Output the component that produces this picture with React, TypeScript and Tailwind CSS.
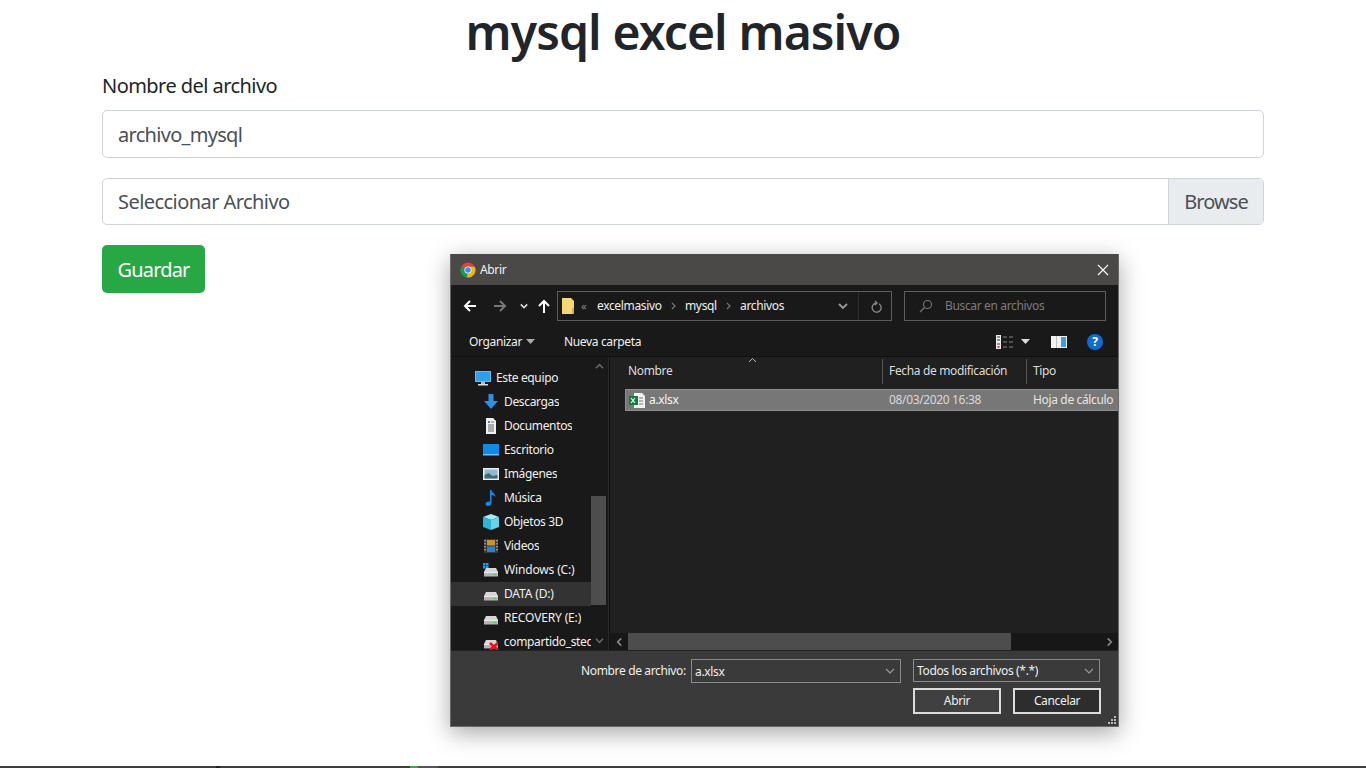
import React from "react";

const ui = "font-['Noto_Sans','Open_Sans',sans-serif]";

function Chrome() {
  return (
    <svg width="16" height="16" viewBox="0 0 16 16">
      <circle cx="8" cy="8" r="7.5" fill="#db4437" />
      <path d="M8 8 L1.5 4.2 A7.5 7.5 0 0 0 7 15.4 Z" fill="#0f9d58" />
      <path d="M8 8 L7 15.4 A7.5 7.5 0 0 0 14.8 4.8 L8 4.8 Z" fill="#f4b400" />
      <circle cx="8" cy="8" r="3.6" fill="#fff" />
      <circle cx="8" cy="8" r="2.8" fill="#4285f4" />
    </svg>
  );
}

function ArrowLeft({ color = "#fff" }: { color?: string }) {
  return (
    <svg width="14" height="14" viewBox="0 0 14 14" fill="none" stroke={color} strokeWidth="2">
      <path d="M13 7H2M7 2L2 7l5 5" />
    </svg>
  );
}

function ArrowRight() {
  return (
    <svg width="14" height="14" viewBox="0 0 14 14" fill="none" stroke="#777" strokeWidth="2">
      <path d="M1 7h11M7 2l5 5-5 5" />
    </svg>
  );
}

function ArrowUp() {
  return (
    <svg width="14" height="14" viewBox="0 0 14 14" fill="none" stroke="#fff" strokeWidth="2">
      <path d="M7 14V2M2 7l5-5 5 5" />
    </svg>
  );
}

function Chev({ color = "#ccc", w = 8, sw = 1.5 }: { color?: string; w?: number; sw?: number }) {
  return (
    <svg width={w} height={w} viewBox="0 0 10 10" fill="none" stroke={color} strokeWidth={sw * 1.2}>
      <path d="M1 3l4 4 4-4" />
    </svg>
  );
}

function Crumb() {
  return (
    <svg width="5" height="8" viewBox="0 0 5 8" fill="none" stroke="#777" strokeWidth="1.2">
      <path d="M1 1l3 3-3 3" />
    </svg>
  );
}

function Caret({ color = "#aaa" }: { color?: string }) {
  return (
    <svg width="9" height="5" viewBox="0 0 9 5">
      <path d="M0 0h9L4.500 5z" fill={color} />
    </svg>
  );
}

function Drive({ win, x }: { win?: boolean; x?: boolean }) {
  return (
    <svg width="16" height="16" viewBox="0 0 16 16">
      {win && <path d="M0 1h2.500v2.500H0zM3 1h2.500v2.500H3zM0 4h2.500v2.500H0zM3 4h2.500v2.500H3z" fill="#1ea0f0" />}
      <path d="M3 6h10l2 4H1z" fill="#d8d8d8" />
      <rect x="1" y="10" width="14" height="4.500" fill="#b5b5b5" />
      <rect x="1" y="10" width="14" height="1" fill="#ededed" />
      <rect x="10.500" y="12" width="2" height="1.200" fill="#3fd24c" />
      {x && <path d="M7 9l8 7M15 9l-8 7" stroke="#e81123" strokeWidth="2.600" />}
    </svg>
  );
}

const tree: { label: string; icon: React.ReactNode; active?: boolean; wide?: boolean }[] = [
  {
    label: "Descargas",
    icon: (
      <svg width="16" height="16" viewBox="0 0 16 16">
        <path d="M5.500 0h5v7H15l-7 8-7-8h4.500z" fill="#2f8fe6" />
      </svg>
    ),
  },
  {
    label: "Documentos",
    icon: (
      <svg width="16" height="16" viewBox="0 0 16 16">
        <path d="M3 0h7l3 3v13H3z" fill="#f1f1f1" />
        <path d="M5 3h2v2H5z" fill="#3b82c4" />
        <path d="M5 7h6M5 9h6M5 11h6M5 13h6M8 4h3" stroke="#666" strokeWidth="1" />
      </svg>
    ),
  },
  {
    label: "Escritorio",
    icon: (
      <svg width="16" height="16" viewBox="0 0 16 16">
        <rect y="2" width="16" height="11" fill="#0f8ae8" />
        <rect y="12" width="16" height="1.500" fill="#6cc0f5" />
      </svg>
    ),
  },
  {
    label: "Imágenes",
    icon: (
      <svg width="16" height="16" viewBox="0 0 16 16">
        <rect y="2" width="16" height="12" fill="#eee" />
        <rect x="1.500" y="3.500" width="13" height="9" fill="#8fb8d8" />
        <path d="M1.500 12.500V9l4-2 4 3 5-1v3.500z" fill="#3f6f68" />
      </svg>
    ),
  },
  {
    label: "Música",
    icon: (
      <svg width="16" height="16" viewBox="0 0 16 16">
        <path d="M7 0h1.500c.3 3 4 3.500 4 7-1-1.500-2.500-2-4-2v8c0 2-1.500 3-3.500 3-1.500 0-2.500-.8-2.500-2 0-1.500 1.500-2.500 3-2.500.6 0 1.500.1 1.500.4z" fill="#1689e8" />
      </svg>
    ),
  },
  {
    label: "Objetos 3D",
    icon: (
      <svg width="16" height="16" viewBox="0 0 16 16">
        <path d="M8 0l8 3-8 3-8-3z" fill="#a6eaf5" />
        <path d="M0 3l8 3v10l-8-3z" fill="#2bb5d8" />
        <path d="M16 3L8 6v10l8-3z" fill="#67d3e8" />
      </svg>
    ),
  },
  {
    label: "Videos",
    icon: (
      <svg width="16" height="16" viewBox="0 0 16 16">
        <rect x="1" y="1" width="14" height="14" fill="#3a3a3a" />
        <rect x="4" y="2" width="8" height="5.500" fill="#c9932e" />
        <rect x="4" y="8.500" width="8" height="5.500" fill="#2d7fd0" />
        <path d="M2 2v12M14 2v12" stroke="#aaa" strokeWidth="1.500" strokeDasharray="1.500 1.500" />
      </svg>
    ),
  },
  { label: "Windows (C:)", icon: <Drive win />, wide: true },
  { label: "DATA (D:)", icon: <Drive />, active: true, wide: true },
  { label: "RECOVERY (E:)", icon: <Drive />, wide: true },
  { label: "compartido_stec", icon: <Drive x /> },
];

function Dialog() {
  return (
    <div className={`absolute left-[450px] top-[254px] w-[669px] h-[473px] flex flex-col border border-[#6a6a6a] border-t-0 bg-[#191919] text-[12px] leading-4 tracking-[-0.35px] text-[#f0f0f0] shadow-[0_6px_22px_rgba(0,0,0,0.35)] ${ui}`}>
      <div className="h-[31px] bg-[#4b4947] flex items-center pl-[9px] pr-[9px] shrink-0">
        <Chrome />
        <span className="ml-[4px] text-[#f2f2f2]">Abrir</span>
        <svg className="ml-auto" width="12" height="12" viewBox="0 0 12 12" stroke="#fff" strokeWidth="1.100">
          <path d="M1 1l10 10M11 1L1 11" />
        </svg>
      </div>

      <div className="h-[42px] bg-[#19191a] flex items-center shrink-0">
        <div className="ml-[12px]"><ArrowLeft /></div>
        <div className="ml-[16px]"><ArrowRight /></div>
        <div className="ml-[13px]"><Chev color="#ddd" w={8} sw={1.600} /></div>
        <div className="ml-[9px]"><ArrowUp /></div>
        <div className="ml-[6px] w-[335px] h-[30px] border border-[#5c5c5c] bg-[#191919] flex items-center">
          <svg className="ml-[4px]" width="13" height="16" viewBox="0 0 13 16">
            <path d="M0 0h9l3 3v13H0z" fill="#f7d774" />
            <path d="M10 10h2v6h-2z" fill="#d9ae3c" />
          </svg>
          <span className="ml-[6px] w-[12px] text-[#8a8a8a] text-[11px]">«</span>
          <span className="ml-[4px] w-[69px] whitespace-nowrap">excelmasivo</span>
          <span className="ml-[5px]"><Crumb /></span>
          <span className="ml-[9px] w-[34px]">mysql</span>
          <span className="ml-[7px]"><Crumb /></span>
          <span className="ml-[9px] w-[46px]">archivos</span>
          <span className="ml-[52px]"><Chev color="#999" w={10} /></span>
          <span className="ml-[10px] w-px h-full bg-[#2b2b2b]" />
          <svg className="ml-[11px]" width="12" height="13" viewBox="0 0 12 13" fill="none" stroke="#8a8a8a" strokeWidth="1.300">
            <path d="M8 3.300a4.500 4.500 0 1 1-3-.6M4 .5l2 2-2 2" transform="translate(1 0.500)" />
          </svg>
        </div>
        <div className="ml-[12px] w-[202px] h-[30px] border border-[#5c5c5c] flex items-center">
          <svg className="ml-[14px]" width="14" height="14" viewBox="0 0 14 14" fill="none" stroke="#777" strokeWidth="1.100">
            <circle cx="8.500" cy="5.500" r="4" />
            <path d="M5.500 8.500L1 13" />
          </svg>
          <span className="ml-[12px] text-[#7b7b7b]">Buscar en archivos</span>
        </div>
      </div>

      <div className="h-[30px] bg-[#191919] flex items-center border-b border-[#101010] shrink-0">
        <span className="ml-[18px] w-[52px]">Organizar</span>
        <span className="ml-[5px]"><Caret /></span>
        <span className="ml-[29px] w-[80px] whitespace-nowrap">Nueva carpeta</span>
        <svg className="ml-[352px]" width="17" height="14" viewBox="0 0 17 14">
          <rect x="0" y="0" width="5" height="14" fill="#eee" />
          <path d="M1 2h3M1 5h3M1 9h3" stroke="#333" strokeWidth="1" />
          <rect x="1.500" y="11" width="2" height="2" fill="#d33" />
          <path d="M7 2h4M13 2h4M7 7h4M13 7h4M7 12h4M13 12h4" stroke="#888" strokeWidth="1" />
        </svg>
        <span className="ml-[8px]"><Caret color="#ddd" /></span>
        <svg className="ml-[21px]" width="16" height="12" viewBox="0 0 16 12">
          <rect width="16" height="12" fill="#f2f2f2" />
          <rect x="10" y="1" width="5" height="10" fill="#3f9be8" />
          <rect x="5" width="1" height="12" fill="#bdbdbd" />
        </svg>
        <div className="ml-[20px] w-4 h-4 rounded-full bg-[#0f6cd0] flex items-center justify-center text-white text-[12px] font-bold">?</div>
      </div>

      <div className="flex-1 flex min-h-0">
        <div className="w-[158px] flex shrink-0 bg-[#191919] border-r border-[#2a2a2a] overflow-hidden">
          <div className="w-[140px] shrink-0 pt-[9px] whitespace-nowrap overflow-hidden">
            <div className="h-6 flex items-center pl-[24px]">
              <svg width="16" height="15" viewBox="0 0 16 15">
                <rect width="16" height="11" fill="#5cc2f2" />
                <rect x="1" y="1" width="14" height="9" fill="#2f9fe8" />
                <path d="M6 11h4v2H6z" fill="#bbb" />
                <rect x="3" y="13" width="10" height="1.500" fill="#ddd" />
              </svg>
              <span className="ml-[5px]">Este equipo</span>
            </div>
            {tree.map((t) => (
              <div key={t.label} className={`h-6 flex items-center pl-[32px] ${t.active ? "bg-[#333333]" : ""}`}>
                {t.icon}
                <span className={`ml-[5px] overflow-hidden ${t.wide ? "tracking-[-0.15px]" : ""}`}>{t.label}</span>
              </div>
            ))}
          </div>
          <div className="w-[17px] shrink-0 flex flex-col relative pt-[5px]">
            <svg className="ml-[4px]" width="9" height="9" viewBox="0 0 10 10" fill="none" stroke="#666" strokeWidth="1.800">
              <path d="M1 7l4-4 4 4" />
            </svg>
            <div className="mt-[125px] h-[109px] w-[15px] bg-[#4d4d4d]" />
            <svg className="ml-[4px] mt-[31px]" width="9" height="9" viewBox="0 0 10 10" fill="none" stroke="#666" strokeWidth="1.800">
              <path d="M1 3l4 4 4-4" />
            </svg>
          </div>
        </div>

        <div className="flex-1 flex flex-col bg-[#202020] border-l border-[#111] min-w-0 overflow-hidden">
          <div className="h-[28px] flex items-center relative text-[#dcdcdc] shrink-0 whitespace-nowrap">
            <svg className="absolute left-[138px] top-0" width="9" height="6" viewBox="0 0 9 6" fill="none" stroke="#bbb" strokeWidth="1">
              <path d="M1 5l3.500-3.500L8 5" />
            </svg>
            <span className="ml-[18px] w-[254px]">Nombre</span>
            <span className="w-px h-[25px] bg-[#555]" />
            <span className="ml-[6px] w-[137px]">Fecha de modificación</span>
            <span className="w-px h-[25px] bg-[#555]" />
            <span className="ml-[6px]">Tipo</span>
          </div>
          <div className="ml-[15px] mt-[4px] h-[22px] bg-[#777777] border border-[#8e8e8e] border-r-0 flex items-center whitespace-nowrap shrink-0">
            <svg className="ml-[3px]" width="16" height="15" viewBox="0 0 16 15">
              <path d="M5 0h8l3 3v12H5z" fill="#f2f2f2" />
              <path d="M10 5h4M10 8h4M10 11h4" stroke="#777" strokeWidth="1" />
              <rect y="3" width="9" height="9" fill="#107c41" />
              <path d="M2 5l4 5M6 5l-4 5" stroke="#fff" strokeWidth="1.200" />
            </svg>
            <span className="ml-[4px] w-[240px] text-[#f5f5f5]">a.xlsx</span>
            <span className="w-[144px] text-[#d9d9d9]">08/03/2020 16:38</span>
            <span className="text-[#e5e5e5]">Hoja de cálculo</span>
          </div>
          <div className="flex-1" />
          <div className="h-[17px] bg-[#171717] flex items-center shrink-0">
            <svg className="ml-[5px]" width="9" height="10" viewBox="0 0 10 10" fill="none" stroke="#888" strokeWidth="1.800">
              <path d="M7 1L3 5l4 4" />
            </svg>
            <div className="ml-[4px] w-[383px] h-full bg-[#4d4d4d]" />
            <svg className="ml-auto mr-[4px]" width="9" height="10" viewBox="0 0 10 10" fill="none" stroke="#888" strokeWidth="1.800">
              <path d="M3 1l4 4-4 4" />
            </svg>
          </div>
        </div>
      </div>

      <div className="h-[76px] bg-[#3a3a3a] border-t border-[#222] shrink-0 relative pt-[7px]">
        <div className="flex items-center h-[25px]">
          <span className="ml-[130px] w-[109px] whitespace-nowrap">Nombre de archivo:</span>
          <div className="ml-px w-[210px] h-[24px] border border-[#8a8a8a] flex items-center px-[3px]">
            <span className="mt-[2px]">a.xlsx</span>
            <span className="ml-auto mr-[2px]"><Chev color="#999" w={10} sw={1} /></span>
          </div>
          <div className="ml-[12px] w-[187px] h-[23px] border border-[#8a8a8a] flex items-center px-[3px]">
            <span>Todos los archivos (*.*)</span>
            <span className="ml-auto mr-[2px]"><Chev color="#999" w={10} sw={1} /></span>
          </div>
        </div>
        <div className="flex justify-end mt-[5px] mr-[17px] gap-[12px]">
          <button className="w-[88px] h-[26px] border-2 border-[#dcdcdc] bg-[#404040]">Abrir</button>
          <button className="w-[88px] h-[26px] border-2 border-[#dcdcdc] bg-[#2d2d2d]">Cancelar</button>
        </div>
        <svg className="absolute right-[1px] bottom-[1px]" width="10" height="10" viewBox="0 0 10 10" fill="#bbb">
          <path d="M7 1h2v2H7zM4 4h2v2H4zM7 4h2v2H7zM1 7h2v2H1zM4 7h2v2H4zM7 7h2v2H7z" />
        </svg>
      </div>
    </div>
  );
}

export default function App() {
  return (
    <div className={`relative h-screen overflow-hidden bg-white flex flex-col ${ui}`}>
      <div className="flex-1 flex flex-col w-[1162px] ml-[102px]">
        <h1 className="text-center text-[48px] leading-[58px] mt-[3px] font-semibold tracking-[-0.88px] text-[#212529]">mysql excel masivo</h1>
        <label className="mt-[10px] text-[20px] leading-[30px] tracking-[-0.55px] text-[#212529]">Nombre del archivo</label>
        <div className="mt-[9px] h-[48px] border border-[#ced4da] rounded-[5px] flex items-center pt-px px-[15px] text-[20px] tracking-[-0.7px] text-[#495057]">archivo_mysql</div>
        <div className="mt-[20px] h-[47px] border border-[#ced4da] rounded-[5px] flex items-center pl-[15px] text-[20px] tracking-[-0.56px] text-[#495057] overflow-hidden">
          <span>Seleccionar Archivo</span>
          <span className="ml-auto h-full w-[95px] bg-[#e9ecef] border-l border-[#ced4da] flex items-center justify-center tracking-[-0.9px]">Browse</span>
        </div>
        <button className="mt-[20px] w-[103px] h-[48px] pt-[2px] rounded-[5px] bg-[#28a745] text-white text-[20px] tracking-[-0.85px]">Guardar</button>
      </div>
      <div className="h-[2px] flex bg-[#3f3f3f] shrink-0">
        <div className="ml-[216px] w-[4px] bg-[#222]" />
        <div className="ml-[190px] w-[8px] bg-[#4f9a4f]" />
        <div className="w-[20px] bg-[#555]" />
      </div>
      <Dialog />
    </div>
  );
}
